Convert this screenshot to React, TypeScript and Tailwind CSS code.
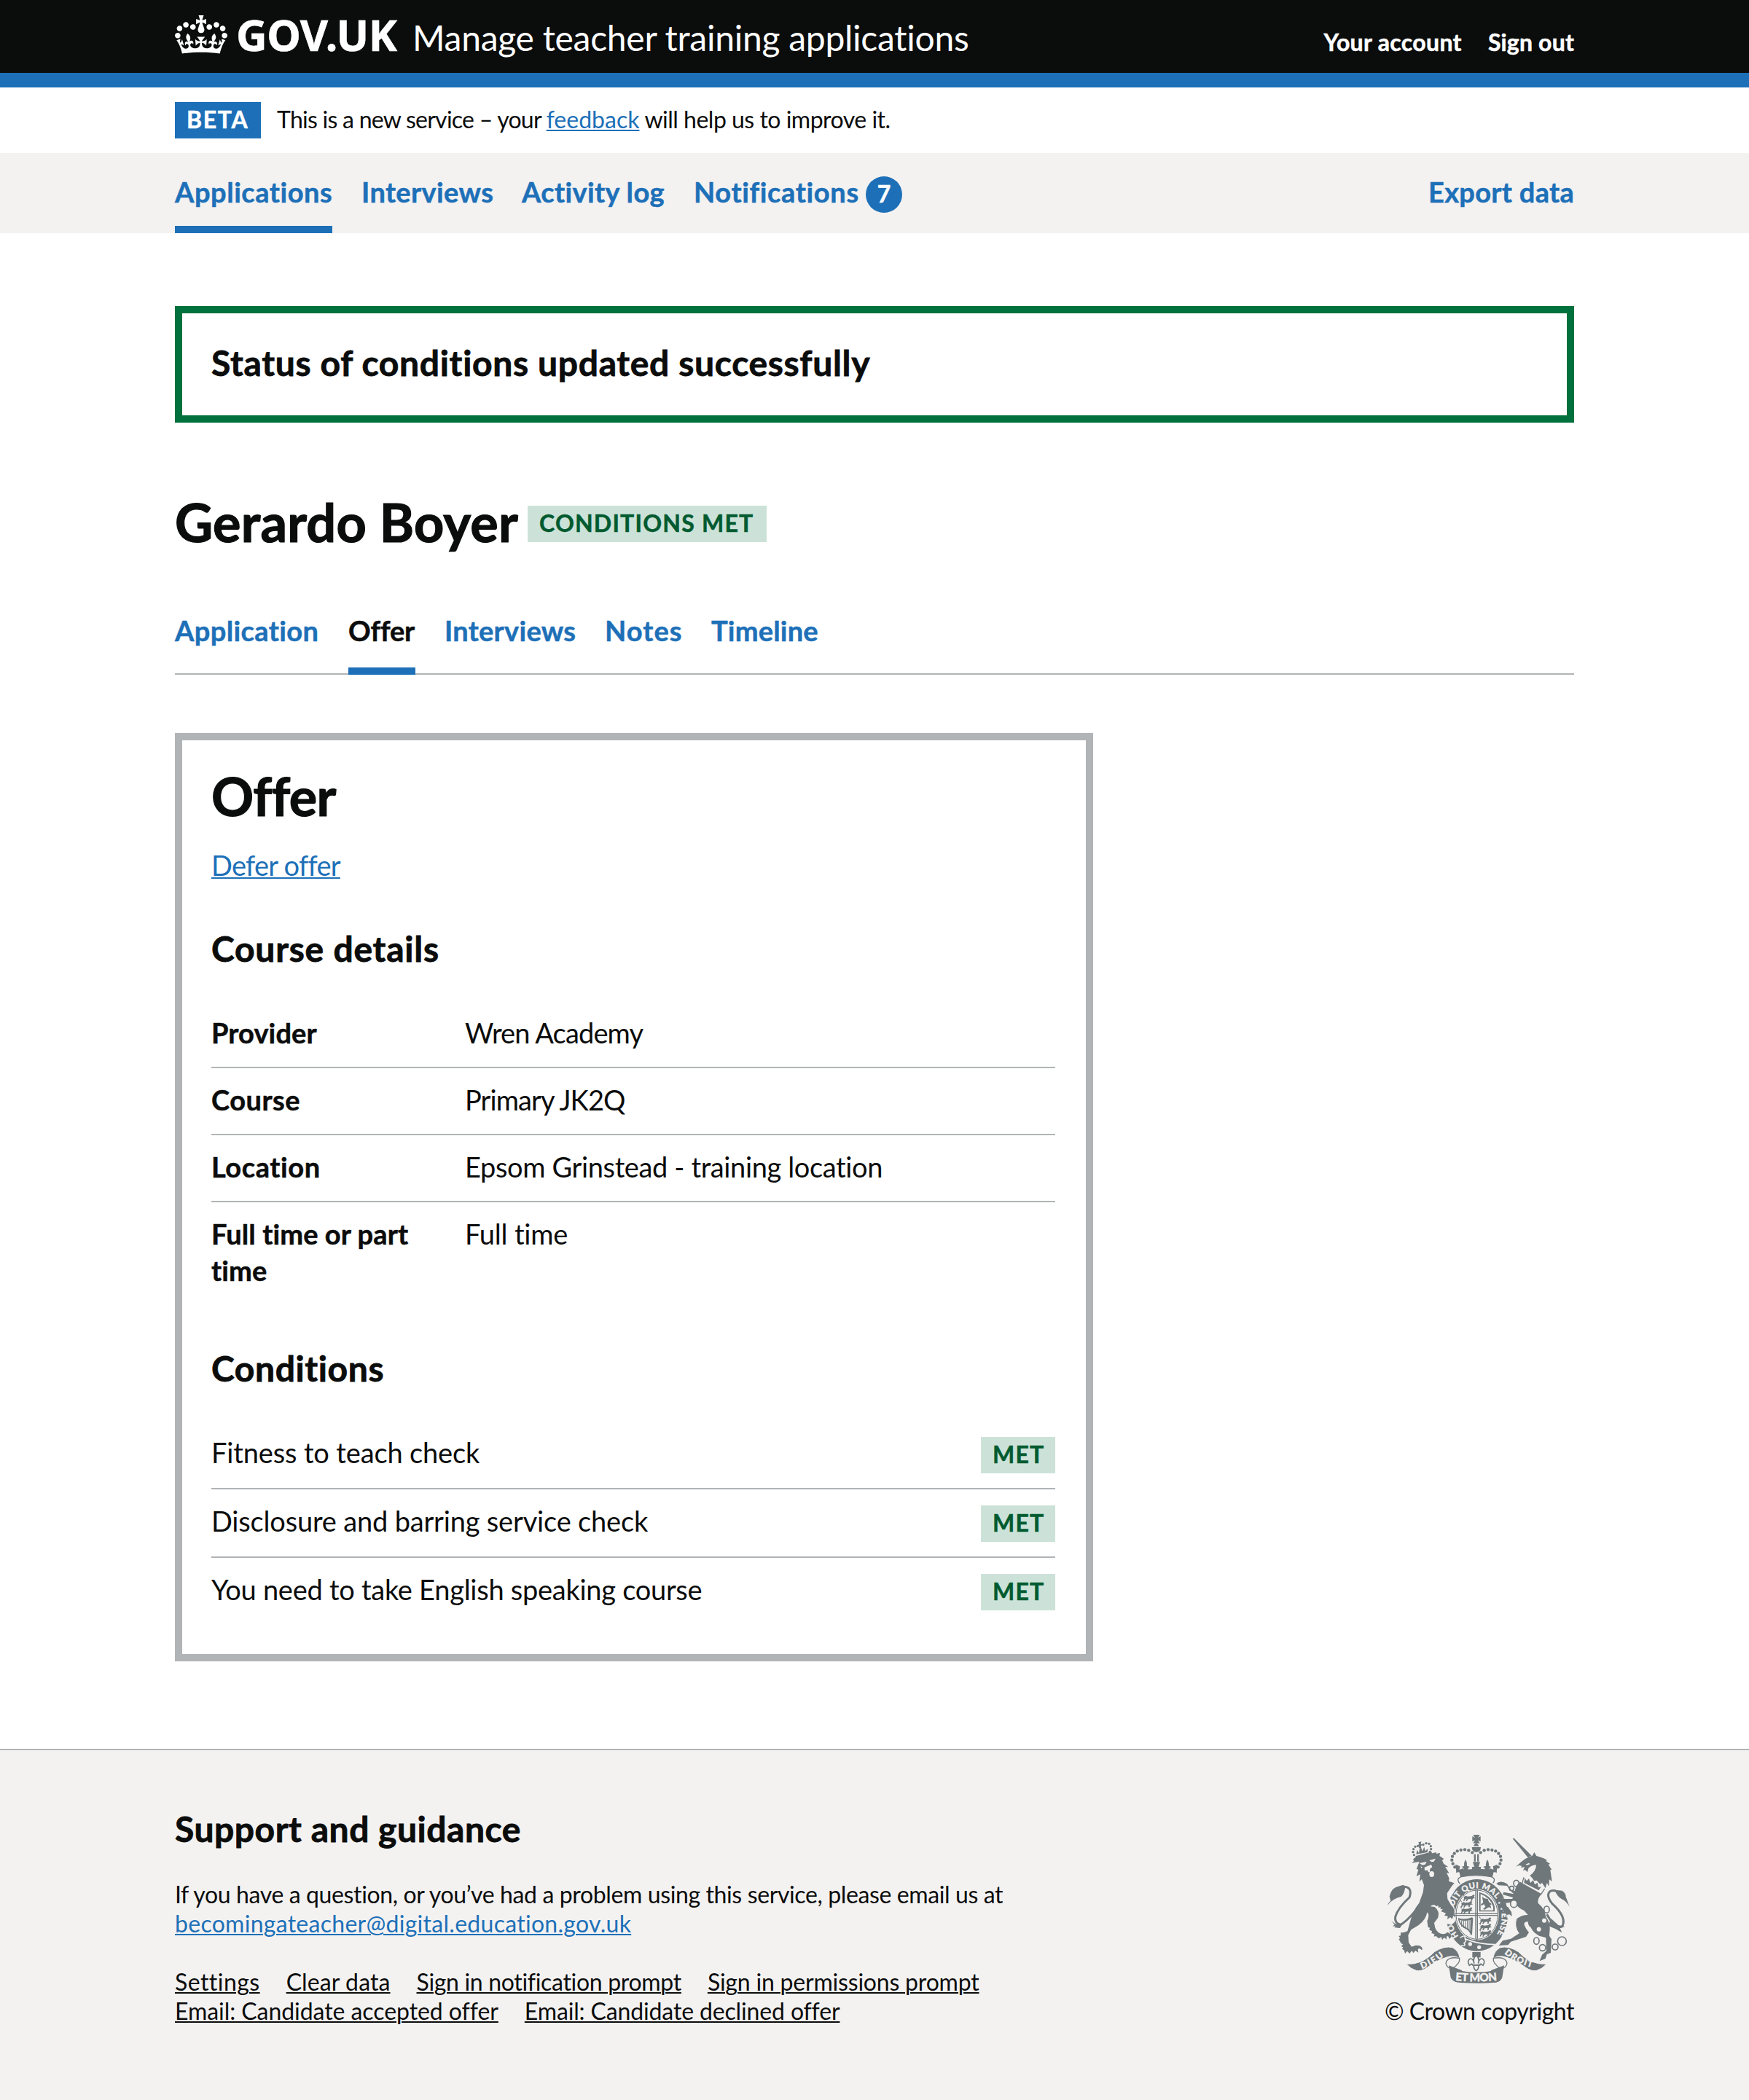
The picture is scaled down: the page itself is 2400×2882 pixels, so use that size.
import type { ReactNode } from "react";

const G = "#6f777a";
const L = "#f3f2f1";

function Crown() {
  return (
    <svg viewBox="0 0 132 97" className="mt-[21px] h-[53px] w-[72px] shrink-0" fill="#fff">
      <path
        fillRule="evenodd"
        d="M25 30.2c3.5 1.5 7.7-.2 9.1-3.7 1.5-3.6-.2-7.8-3.9-9.2-3.6-1.4-7.6.3-9.1 3.9-1.4 3.5.3 7.5 3.9 9zM9 39.5c3.6 1.5 7.8-.2 9.2-3.7 1.5-3.6-.2-7.8-3.9-9.1-3.6-1.5-7.6.2-9.1 3.8-1.4 3.5.3 7.5 3.8 9zM4.4 57.2c3.5 1.5 7.7-.2 9.1-3.8 1.5-3.6-.2-7.7-3.9-9.1-3.5-1.5-7.6.3-9.1 3.8-1.4 3.5.3 7.6 3.9 9.1zm38.3-21.4c3.5 1.5 7.7-.2 9.1-3.8 1.5-3.6-.2-7.7-3.9-9.1-3.6-1.5-7.6.3-9.1 3.8-1.3 3.6.4 7.7 3.9 9.1zm64.4-5.6c-3.6 1.5-7.8-.2-9.1-3.7-1.5-3.6.2-7.8 3.8-9.2 3.6-1.4 7.7.3 9.2 3.9 1.3 3.5-.4 7.5-3.9 9zm15.9 9.3c-3.6 1.5-7.7-.2-9.1-3.7-1.5-3.6.2-7.8 3.7-9.1 3.6-1.5 7.7.2 9.2 3.8 1.5 3.5-.3 7.5-3.8 9zm4.7 17.7c-3.6 1.5-7.8-.2-9.2-3.8-1.5-3.6.2-7.7 3.9-9.1 3.6-1.5 7.7.3 9.2 3.8 1.3 3.5-.4 7.6-3.9 9.1zM89.3 35.8c-3.6 1.5-7.8-.2-9.2-3.8-1.4-3.6.2-7.7 3.9-9.1 3.6-1.5 7.7.3 9.2 3.8 1.4 3.6-.3 7.7-3.9 9.1zM69.7 17.7l8.9 4.7V9.3l-8.9 2.8c-.2-.3-.5-.6-.9-.9L72.4 0H59.6l3.5 11.2c-.3.3-.6.5-.9.9l-8.8-2.8v13.1l8.8-4.7c.3.3.6.7.9.9l-5 15.4v.1c-.2.8-.4 1.6-.4 2.4 0 4.1 3.1 7.5 7 8.1h.2c.3 0 .7.1 1 .1.4 0 .7 0 1-.1h.2c4-.6 7.1-4.1 7.1-8.1 0-.8-.1-1.7-.4-2.4V34l-5.1-15.4c.4-.2.7-.6 1-.9zM66 92.8c16.9 0 32.8 1.1 47.1 3.2 4-16.9 8.9-26.7 14-33.5l-9.6-3.4c1 4.9 1.1 7.2 0 10.2-1.5-1.4-3-4.3-4.2-8.7L108.6 76c2.8-2 5-3.2 7.5-3.3-4.4 9.4-10 11.9-13.6 11.2-4.3-.8-6.3-4.6-5.6-7.9 1-4.7 5.7-5.9 8-.5 4.3-8.7-3-11.4-7.6-8.8 7.1-7.2 7.9-13.5 2.1-21.1-8 6.1-8.1 12.3-4.5 20.8-4.7-5.4-12.1-2.5-9.5 6.2 3.4-5.2 7.9-2 7.2 3.1-.6 4.3-6.4 7.8-13.5 7.2-10.3-.9-10.9-8-11.2-13.8 2.5-.5 7.1 1.8 11 7.3L80.2 60c-4.1 4.4-8 5.3-12.3 5.4 1.4-4.4 8-11.6 8-11.6H55.5s6.4 7.2 7.9 11.6c-4.2-.1-8-1-12.3-5.4l1.4 16.4c3.9-5.5 8.5-7.7 10.9-7.3-.3 5.8-.9 12.8-11.1 13.8-7.2.6-12.9-2.9-13.5-7.2-.7-5 3.8-8.3 7.1-3.1 2.7-8.7-4.6-11.6-9.4-6.2 3.7-8.5 3.6-14.7-4.6-20.8-5.8 7.6-5 13.9 2.2 21.1-4.7-2.6-11.9.1-7.7 8.8 2.3-5.5 7.1-4.2 8.1.5.7 3.3-1.3 7.1-5.7 7.9-3.5.7-9-1.8-13.5-11.2 2.5.1 4.7 1.3 7.5 3.3l-4.7-15.4c-1.2 4.4-2.7 7.2-4.3 8.7-1.1-3-.9-5.3 0-10.2l-9.5 3.4c5 6.9 9.9 16.7 14 33.5 14.8-2.1 30.8-3.2 47.7-3.2z"
      />
    </svg>
  );
}

const crownDots: [number, number][] = [
  [421, 127], [406, 118], [390, 115], [374, 117], [359, 121], [347, 131], [339, 143], [337, 158], [341, 173], [349, 187],
];
const lionCrownDots: [number, number][] = [
  [181, 137], [177, 125], [179, 113], [186, 103], [197, 100], [219, 95], [231, 89], [243, 91], [250, 101], [251, 113], [247, 124],
];

/* One small walking lion, repeated down the first and fourth quarters of the shield. */
function Passant({ x, y }: { x: number; y: number }) {
  return (
    <path
      transform={`translate(${x} ${y})`}
      d="M0 6l8-5 8 3 16-2 8-6 5 4-4 6 6 6-6-1-5 3-2 8h-5l1-8-12 1-5 8H8l4-9-7 2-3 7-4-1 3-10zM0 2l-5-8 3-1 4 7z"
    />
  );
}

function CoatOfArms() {
  return (
    <svg viewBox="72 54 750 612" className="h-[204px] w-[250px]" fill={G} stroke="none">
      {/* crown cushion and garter */}
      <path d="M366 202q72-16 144 0l-6 26q-66-14-132 0z" />
      <path d="M370 256q-18-22 6-29 61-12 122 0 24 7 6 29" fill={L} stroke={G} strokeWidth="4" />
      <ellipse cx="440" cy="385" rx="132" ry="153" fill={L} />
      <ellipse cx="440" cy="385" rx="127" ry="148" />
      <ellipse cx="440" cy="383" rx="90" ry="105" fill={L} />
      <ellipse cx="440" cy="383" rx="86" ry="101" fill="none" stroke={G} strokeWidth="3" />
      <path id="garter-motto" d="M364 472A102 119 0 1 1 516 472" fill="none" />
      <text fill={L} stroke={L} strokeWidth="0.8" className="font-['Lato'] font-black" fontSize="34">
        <textPath href="#garter-motto" textLength="506" lengthAdjust="spacing">
          HONI SOIT QUI MAL Y PENSE
        </textPath>
      </text>
      <path d="M371 478q22-16 20 4 8 10-4 18 10 14-12 10M392 482q50 22 122 24" fill="none" stroke={L} strokeWidth="5" />
      <circle cx="412" cy="504" r="8" fill={L} />
      <circle cx="449" cy="517" r="8" fill={L} />

      {/* lion */}
      <path d="M262 240l64-2q30 6 34 28l-30 48 16 36q8 30 4 62l-16 14-22-10-22-14 4-60z" fill={L} />
      <path d="M171 170l10-8-4-6 8-8 34-9 54-13-1 6 16-3-2 12 18 12-7 6 6 14 19 14-13-1 17 26-11-1 11 22-2 12 23 8-10 12-20 30 2 24 14 24q16 14 14 34l5 18-9-8-5 14-8-8-12 10 2-14-14-2 6-10-20-8 8-10-10 2 0-10-8 4-2-10-8 4-6-6q-10-2-18 6l18 2q22 18 14 44l-16 22 4 20q8 22 32 26l10-2 8-6q18 6 17 18l-8 10-6-12-6 2 0 12-10-8-8 10-4-12-10 6-12-10-8 2 2-10-12-4 2-8-12-6 4-8-8-2-4-26q12-24 0-36-4 30-36 54l-30 18-12 22 2 30 12 18 18-6 16 2q14 8 9 18l-12-8-5 4 2 14-12-8-9 10-6-10-9 12-10-10-9 10-4-14-8-4 4-8-8-4 8-8-8-4-10-18 6-2-6-10 8-2 0-12 10 0 18-6 14-50q8-34 34-66l16-44 4-30-9-24-10 10 4-30-16 8 8-28-8-2 12-30z" />
      <path fill={L} d="M203 171l30-6-6 11-11 3zM244 160l26-8-7 12-9 2zM224 188l28-11 4 10-9 7-1 12 8 2-14 0-3-8-12 1zM208 184l7 3-4 5z" />
      <ellipse cx="254" cy="216" rx="10" ry="12" fill={L} />
      <path d="M196 356q-44 54-70 68-26-6-22-32 10-36 58-80 14-42-22-44" fill="none" stroke={G} strokeWidth="9" />
      <path d="M71 346q4-14 14-20l-5-18q8-38 38-42l18-6 9 6q-2 28-16 42-40 10-58 38zM87 408l16 12 28 6-8 12-22-2 4-6-12 2 8-8z" />
      {lionCrownDots.map(([x, y]) => (
        <circle key={`${x}-${y}`} cx={x} cy={y} r="5" />
      ))}
      <path d="M187 142l66-18 3 10-66 18zM199 85l12-3-2 11 9 1-9 6 2 10-10-1 1-9-8-3 8-3zM190 134l4-18 7 14 3-18 6-6 5 16 8-18 4 17 11-10-2 15z" />

      {/* unicorn */}
      <path d="M587 70l6-2 72 72-15 8z" />
      <path d="M600 186l22-20 18-14 28-12 8-14 9 15 28 9 16 8-5 4 18 12-8 2 14 22-6 0 7 48-11-8-2 28-8-14-6 22-14-22-8 6-14-16-10 2-10-14-8-8q26-18 26-44-22 2-32 14l-4 16-10-10-8 4 6-16-14 4 2-8-12-2z" />
      <path fill={L} d="M640 176l14-6 4 5-12 4zM607 190l10-2-2 5z" />
      <path d="M632 256l74 42q-18 20-14 38 26 20 32 56 16 20 16 50l-2 28 9 14-3 56-16 6-6 18-24 10 10-26 18-16-2-54-28-8q-24-12-34-34-12-8-12-24-12-2-16 8 4 18 20 36l-12 18-62 20-12 14-38 2 16-20 34-8 34-22q-20-28-10-60 20-16 46-16l-16-18q-28-12-38-34-18 0-44 4 8 14 16 16l14 20 2 18-10-8-12 2-16-20-10-28-4-20 6-6 10 8 38 0 2-6-42-12 4-10 42 8q-20-18-28-34l-36-2-8-8q20-14 44 2l18 26 14 4q4-26 22-38z" />
      <g fill="none" stroke={G} strokeWidth="4">
        <path fill={L} d="M633 229l-7 26 78 44 15-23" />
      </g>
      <path d="M637 232l8 12 9-10 6 18 12-11 6 18 11-8 5 20 10-4-9 16-61-31z" />
      <path d="M728 382q34 62 64 48 18-38-42-92-28-36-8-52 20-8 34 8" fill="none" stroke={G} strokeWidth="9" />
      <path d="M761 281l30 3q16 12 15 26l16 42q-12-24-34-34-20-12-27-37zM746 400l-14 28 32 14 26 15-8-18 20-6-26-6z" />
      <g fill="none" stroke={G} strokeWidth="5">
        <ellipse cx="602" cy="254" rx="11" ry="13" />
        <circle cx="583" cy="275" r="9" />
        <ellipse cx="592" cy="338" rx="14" ry="15" fill={L} />
        <ellipse cx="727" cy="362" rx="11" ry="14" fill={L} />
        <ellipse cx="685" cy="491" rx="11" ry="14" />
        <circle cx="710" cy="519" r="13" />
        <circle cx="762" cy="516" r="12" />
        <circle cx="790" cy="492" r="18" />
      </g>
      <circle cx="717" cy="407" r="9" fill={L} />
      <circle cx="695" cy="443" r="9" fill={L} />

      {/* central crown */}
      <path d="M424 54h28l-8 12 11-6v22l-11-6 8 13h-28l8-13-11 6V60l11 6zM426 101q3-11 11-12 8 1 11 12zM419 105h37q0 19-18 21-19-2-19-21z" />
      {[1, -1].map((s) => (
        <g key={s} transform={s === 1 ? undefined : "translate(876 0) scale(-1 1)"}>
          {crownDots.map(([x, y]) => (
            <circle key={`${x}-${y}`} cx={x} cy={y} r="6.5" />
          ))}
          <path d="M428 134h7v30h-7zM352 176l18 8-2 14 14-6 3 6q2-8-8-12l10-4q-2-14 6-26 8 12 6 26l12 4q-10 4-8 12l18 0-2-12h10l-6-20h16v42h-70q-12 0-14 4z" />
        </g>
      ))}

      {/* shield */}
      <path d="M433 280h4v202h-4zM440 280h4v202h-4zM350 377h176v4H350zM350 384h176v4H350zM432 492l6-10 8 10z" />
      <Passant x={386} y={304} />
      <Passant x={376} y={330} />
      <Passant x={376} y={356} />
      <Passant x={454} y={398} />
      <Passant x={454} y={424} />
      <Passant x={454} y={450} />
      <path d="M449 290q54 16 64 60v20h-64zM455 298v67h52v-14q-10-38-52-53z" fillRule="evenodd" />
      <path d="M461 308l10 8 14 2 4 12 12 10-6 2 4 16-8-6-10 4-8 6-8-2 10-10-6-10-10 6-3-5 10-9z" />
      <path d="M362 396q26 10 58-2l4 4-4 66-5 4q-6-22-28-30-22-14-25-42z" />
      <path d="M369 404q20 8 44 0l-1 46q-8-12-22-18-18-10-21-28z" fill={L} />
      <path d="M377 406v26M385 407v30M393 408v34M401 407v38M408 405v42" fill="none" stroke={G} strokeWidth="3" />

      {/* pendant fleur-de-lis */}
      <path d="M421 537h34v22h-34z" />
      <path
        d="M437 550q16 14 8 34 4-20 16-20 16 8 4 28l-9-6-10 6q4 12-9 22-13-10-9-22l-10-6-9 6q-12-20 4-28 12 0 16 20-8-20 8-34z"
        fill={L}
        stroke={G}
        strokeWidth="5"
      />
      <path d="M421 588h33v6h-33z" />

      {/* ribbon */}
      {[1, -1].map((s) => (
        <g key={s} transform={s === 1 ? undefined : "translate(876 0) scale(-1 1)"}>
          <path
            d="M149 586q66 4 116-50 40-26 74-18 26 12 31 46l-16-8q-22-4-38 2-44 14-80 42-26 18-46 13-22-6-41-27z"
            stroke={L}
            strokeWidth="3"
          />
          <path d="M368 562q-52-8-56 22 6 20 22 20 16-4 24-16 12-10 10-26z" fill={L} stroke={G} strokeWidth="4" />
          <path d="M324 592l8 50q6 16 30 20l16-50z" />
        </g>
      ))}
      <path d="M330 602q108 36 216 0l-4 43q-8 18-36 18-68 5-136 0-26-2-34-18z" />
      <path id="ribbon-left" d="M214 606q46-16 104-62" fill="none" />
      <path id="ribbon-mid" d="M351 654q87 8 174 0" fill="none" />
      <path id="ribbon-right" d="M552 543q50 42 122 60" fill="none" />
      <g fill={L} stroke={L} strokeWidth="1" className="font-['Lato'] font-black">
        <text fontSize="36"><textPath href="#ribbon-left" textLength="104">DIEU</textPath></text>
        <text fontSize="46"><textPath href="#ribbon-mid" textLength="172">ET MON</textPath></text>
        <text fontSize="36"><textPath href="#ribbon-right" textLength="128">DROIT</textPath></text>
      </g>
    </svg>
  );
}

const link = "text-[#1d70b8] underline decoration-2 underline-offset-2";
const boldS = "font-bold [-webkit-text-stroke:0.5px]";
const boldM = "text-[48px] leading-[60px] font-bold [-webkit-text-stroke:0.8px]";
const boldL = "text-[72px] leading-[80px] font-bold [-webkit-text-stroke:1.2px]";

function Tag({ children, className }: { children: ReactNode; className: string }) {
  return (
    <strong className={`h-[50px] bg-[#cce2d8] pl-4 pt-1 text-[32px] leading-[40px] whitespace-nowrap text-[#005a30] ${boldS} ${className}`}>
      {children}
    </strong>
  );
}

const navItems = [
  { label: "Applications", cls: "w-[216px] tracking-[0.55px] border-[#1d70b8]" },
  { label: "Interviews", cls: "w-[180px] tracking-[0.4px] border-transparent" },
  { label: "Activity log", cls: "w-[196px] tracking-[0.38px] border-transparent" },
];

const tabs = [
  { label: "Application", cls: "w-[198px] tracking-[0.4px] text-[#1d70b8] border-transparent" },
  { label: "Offer", cls: "w-[92px] tracking-[-0.1px] text-[#0b0c0c] border-[#1d70b8]" },
  { label: "Interviews", cls: "w-[180px] tracking-[0.3px] text-[#1d70b8] border-transparent" },
  { label: "Notes", cls: "w-[106px] tracking-[1.1px] text-[#1d70b8] border-transparent" },
  { label: "Timeline", cls: "w-[148px] tracking-[0.2px] text-[#1d70b8] border-transparent" },
];

const details = [
  { key: "Provider", kc: "tracking-[0.12px]", value: "Wren Academy", vc: "tracking-[-0.85px]" },
  { key: "Course", kc: "tracking-[0.5px]", value: "Primary JK2Q", vc: "tracking-[-0.9px]" },
  { key: "Location", kc: "tracking-[0.61px]", value: "Epsom Grinstead - training location", vc: "tracking-[-0.37px]" },
  { key: "Full time or part time", kc: "tracking-[0.1px]", value: "Full time", vc: "tracking-[-0.2px]" },
];

const conditions = [
  { label: "Fitness to teach check", cls: "tracking-[-0.14px]" },
  { label: "Disclosure and barring service check", cls: "tracking-[-0.18px]" },
  { label: "You need to take English speaking course", cls: "tracking-[-0.27px]" },
];

const footerLinks = [
  [
    { label: "Settings", cls: "tracking-[0.45px]" },
    { label: "Clear data", cls: "tracking-[0.1px]" },
    { label: "Sign in notification prompt", cls: "tracking-[-0.32px]" },
    { label: "Sign in permissions prompt", cls: "tracking-[-0.2px]" },
  ],
  [
    { label: "Email: Candidate accepted offer", cls: "tracking-[-0.06px]" },
    { label: "Email: Candidate declined offer", cls: "tracking-[-0.14px]" },
  ],
];

export default function App() {
  return (
    <div className="h-[2882px] w-[2400px] bg-white font-['Lato',sans-serif] text-[#0b0c0c]">
      <header className="h-[120px] border-b-[20px] border-[#1d70b8] bg-[#0b0c0c] px-[240px] text-white">
        <div className="flex items-start">
          <Crown />
          <span className="mt-[17px] ml-3 w-[242px] font-['Noto_Sans'] text-[59px] leading-[60px] font-bold tracking-[-0.5px] [-webkit-text-stroke:0.6px]">GOV.UK</span>
          <span className="mt-[22px] text-[48px] leading-[60px] tracking-[-0.27px] whitespace-nowrap">Manage teacher training applications</span>
          <nav className={`mt-[38px] ml-auto flex gap-9 text-[32px] leading-[40px] ${boldS}`}>
            <a className="tracking-[0.35px]">Your account</a>
            <a className="tracking-[0.18px]">Sign out</a>
          </nav>
        </div>
      </header>

      <div className="flex h-[90px] px-[240px] pt-5">
        <strong className={`h-[50px] w-[118px] bg-[#1d70b8] pt-1 pl-4 text-[32px] leading-[40px] tracking-[1.69px] text-white ${boldS}`}>BETA</strong>
        <p className="mt-1 ml-[22px] text-[32px] leading-[40px] tracking-[-0.74px] whitespace-nowrap">
          This is a new service – your <a className={`tracking-[0px] ${link}`}>feedback</a>
          <span className="tracking-[-0.5px]"> will help us to improve it.</span>
        </p>
      </div>

      <nav className={`flex h-[110px] gap-10 bg-[#f3f2f1] px-[240px] text-[38px] leading-[50px] whitespace-nowrap text-[#1d70b8] ${boldS}`}>
        {navItems.map((n) => (
          <a key={n.label} className={`border-b-[10px] pt-7 ${n.cls}`}>{n.label}</a>
        ))}
        <a className="flex w-[286px] justify-between pt-7">
          <span className="tracking-[0.65px]">Notifications</span>
          <span className="mt-1 size-[50px] rounded-full bg-[#1d70b8] pt-1 text-center text-[32px] leading-[40px] text-white">7</span>
        </a>
        <a className="ml-auto pt-7 tracking-[0.3px]">Export data</a>
      </nav>

      <main className="px-[240px]">
        <div className="mt-[100px] h-[160px] border-[10px] border-[#00703c] pt-[38px] pl-10">
          <h3 className={`tracking-[0.67px] ${boldM}`}>Status of conditions updated successfully</h3>
        </div>

        <div className="mt-24 flex h-20 items-start">
          <h1 className={`w-[484px] tracking-[0.25px] ${boldL}`}>Gerardo Boyer</h1>
          <Tag className="mt-[18px] w-[328px] tracking-[1.22px]">CONDITIONS MET</Tag>
        </div>

        <nav className={`mt-[84px] flex h-[86px] gap-10 border-b-2 border-[#b1b4b6] text-[38px] leading-[50px] ${boldS}`}>
          {tabs.map((t) => (
            <a key={t.label} className={`-mb-0.5 border-b-[10px] ${t.cls}`}>{t.label}</a>
          ))}
        </nav>

        <section className="mt-20 h-[1274px] w-[1260px] border-[10px] border-[#b1b4b6] pt-9 pr-[42px] pl-10 text-[38px] leading-[50px]">
          <h2 className={`tracking-[-0.6px] ${boldL}`}>Offer</h2>
          <p className="mt-[30px]">
            <a className={`tracking-[-0.75px] ${link}`}>Defer offer</a>
          </p>

          <h3 className={`mt-[60px] tracking-[0.76px] ${boldM}`}>Course details</h3>
          <dl className="mt-[42px]">
            {details.map((d) => (
              <div key={d.key} className="flex border-b-2 border-[#b1b4b6] pt-[18px] pb-[22px] last:border-0 last:pb-0">
                <dt className={`w-[348px] pr-10 ${boldS} ${d.kc}`}>{d.key}</dt>
                <dd className={d.vc}>{d.value}</dd>
              </div>
            ))}
          </dl>

          <h3 className={`mt-20 tracking-[0.6px] ${boldM}`}>Conditions</h3>
          <ul className="mt-[42px]">
            {conditions.map((c) => (
              <li key={c.label} className="flex h-[94px] justify-between border-b-2 border-[#b1b4b6] pt-[18px] last:border-0">
                <span className={c.cls}>{c.label}</span>
                <Tag className="mt-1 w-[102px] tracking-[1.18px]">MET</Tag>
              </li>
            ))}
          </ul>
        </section>
      </main>

      <footer className="mt-[120px] flex h-[482px] justify-between border-t-2 border-[#b1b4b6] bg-[#f3f2f1] px-[240px] text-[32px] leading-[40px]">
        <div className="pt-[78px] whitespace-nowrap">
          <h2 className={`tracking-[0.52px] ${boldM}`}>Support and guidance</h2>
          <p className="mt-10 tracking-[-0.38px]">
            If you have a question, or you’ve had a problem using this service, please email us at
            <br />
            <a className={`tracking-[0.28px] ${link}`}>becomingateacher@digital.education.gov.uk</a>
          </p>
          <div className="mt-10">
            {footerLinks.map((row, i) => (
              <div key={i} className="flex gap-9">
                {row.map((l) => (
                  <a key={l.label} className={`underline decoration-2 underline-offset-2 ${l.cls}`}>{l.label}</a>
                ))}
              </div>
            ))}
          </div>
        </div>
        <div className="flex flex-col items-end pt-[116px]">
          <div className="mr-[6px]">
            <CoatOfArms />
          </div>
          <span className="mt-[18px] tracking-[-0.49px]">© Crown copyright</span>
        </div>
      </footer>
    </div>
  );
}
